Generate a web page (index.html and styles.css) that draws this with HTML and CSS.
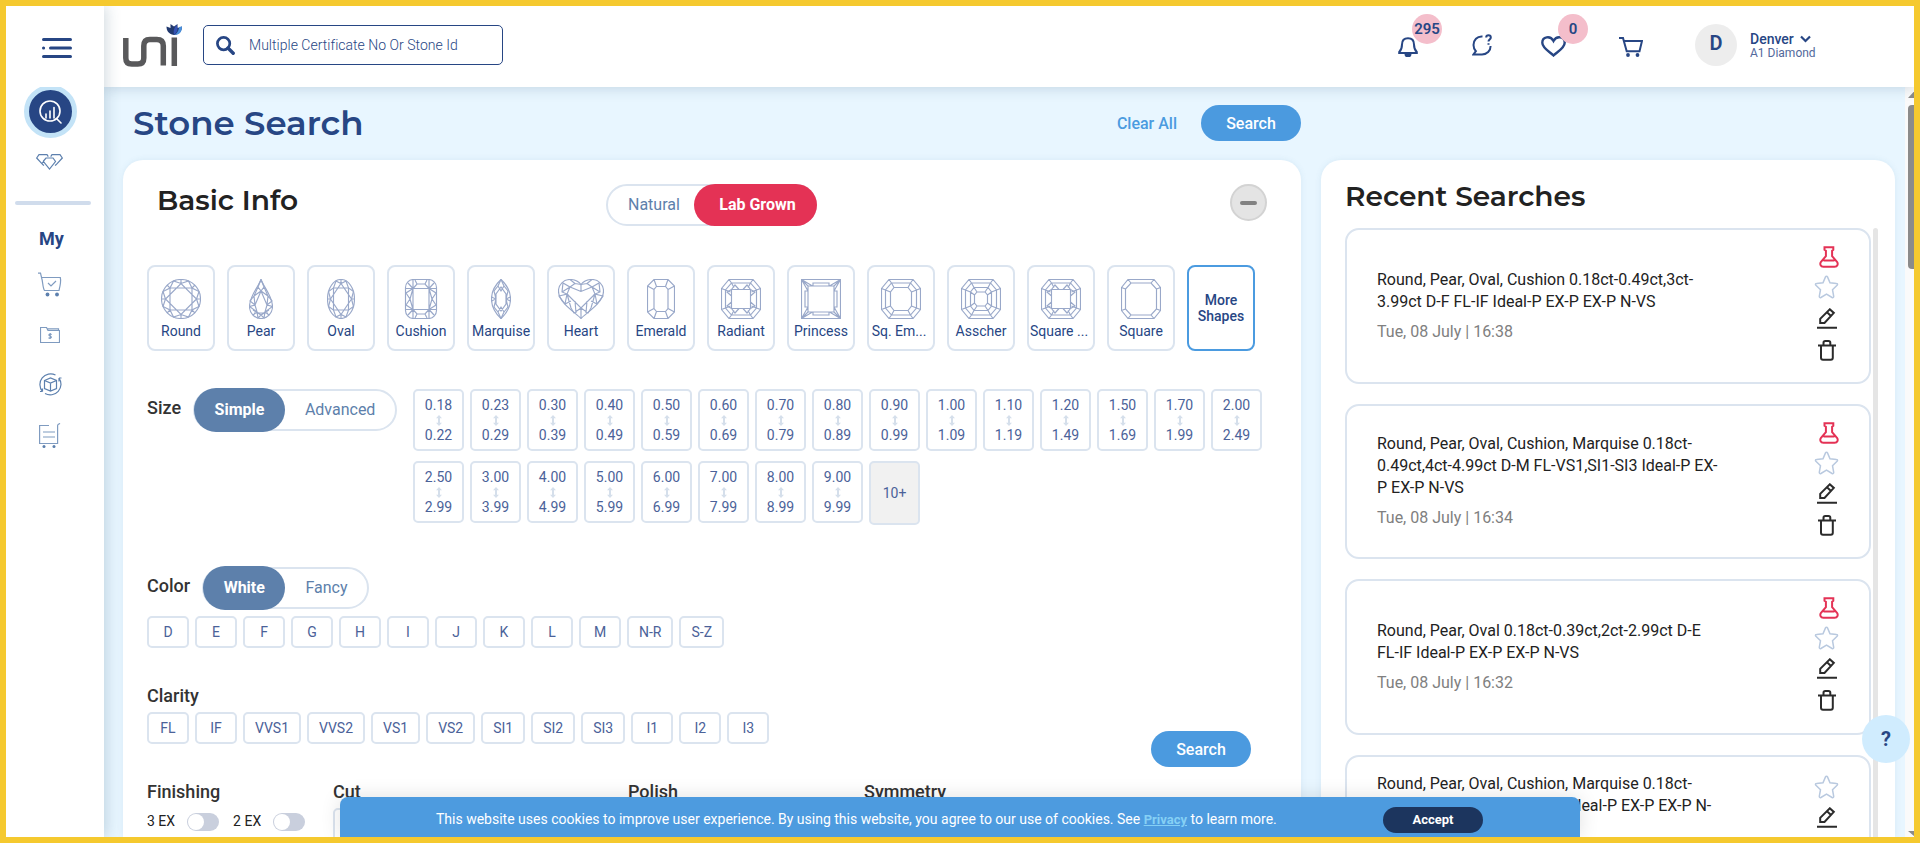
FILE: index.html
```html
<!DOCTYPE html>
<html lang="en">
<head>
<meta charset="utf-8">
<title>Stone Search</title>
<link rel="stylesheet" href="styles.css">
</head>
<body>
<svg class="defs" aria-hidden="true">
  <symbol id="round" viewBox="0 0 40 40"><circle cx="20" cy="20" r="19.5"/><path d="M31 31H9V9h22zM35.500 20 20 35.500 4.500 20 20 4.500z"/><path d="M35.500 20 38 27.500 31 31 27.500 38 20 35.500 12.500 38 9 31 2 27.500 4.500 20 2 12.500 9 9 12.500 2 20 4.500 27.500 2 31 9 38 12.500zM35.500 20h4M31 31l3 3M20 35.500v4M9 31l-3 3M4.500 20h-4M9 9 6 6M20 4.500v-4M31 9l3-3"/></symbol>
  <symbol id="oval" viewBox="0 0 28 40"><ellipse cx="14" cy="20" rx="13.500" ry="19.500"/><path d="M21.500 31h-15V9h15zM24.500 20 14 35.500 3.500 20 14 4.500z"/><path d="M24.500 20 26.500 27.500 21.500 31 19 38 14 35.500 9 38 6.500 31 1.500 27.500 3.500 20 1.500 12.500 6.500 9 9 2 14 4.500 19 2 21.500 9 26.500 12.500zM24.500 20h3M14 35.500v4M3.500 20h-3M14 4.500v-4"/></symbol>
  <symbol id="pear" viewBox="0 0 24 40"><path d="M12 .5C10 7 .5 17 .5 27.500a11.500 12 0 0 0 23 0C23.500 17 14 7 12 .5z"/><path d="M12 .5 9 8l3 4 3-4zM12 12 6 26l2 7 4 3 4-3 2-7zM9 8l-4 9 7-5 7 5-4-9M5 17l1 9-5.500 1.500L8 33l-4 3M19 17l-1 9 5.500 1.500L16 33l4 3M5 17l-4 5 5 4M19 17l4 5-5 4M8 33l1 6 3-3 3 3 1-6M4 31l8 5 8-5M5 34h14"/></symbol>
  <symbol id="cushion" viewBox="0 0 32 40"><rect x=".5" y=".5" width="31" height="39" rx="8"/><path d="M8 1v38M24 1v38M1 9.500h30M1 30.500h30M8 9.500 1 14l4 6-4 6 7 4.500M5 20 8 9.500M5 20l3 10.500M24 9.500l7 4.500-4 6 4 6-7 4.500M27 20 24 9.500M27 20l-3 10.500M8 9.500 3 4M24 9.500 29 4M8 30.500 3 36M24 30.500l5 5.500M8 9.500 12 5h8l4 4.500M10 1l2 4M22 1l-2 4M8 30.500l4 4.500h8l4-4.500M10 39l2-4M22 39l-2-4"/></symbol>
  <symbol id="marquise" viewBox="0 0 20 40"><path d="M10 .5C4 6 .5 13 .5 20S4 34 10 39.500C16 34 19.500 27 19.500 20S16 6 10 .5z"/><path d="M10 8 5 15v10l5 7 5-7V15zM10 .5 7 7l3 5 3-5zM10 39.500 7 33l3-5 3 5zM7 7l-4 5 2 8-4.500 2M13 7l4 5-2 8 4.500 2M7 33l-4-5 2-8-4.500-2M13 33l4-5-2-8 4.500-2"/></symbol>
  <symbol id="heart" viewBox="0 0 46 40"><path d="M23 39.500C18 34 .5 24 .5 12A11.500 11.500 0 0 1 12 .5C17 .5 21 3 23 5.500 25 3 29 .5 34 .5A11.500 11.500 0 0 1 45.500 12C45.500 24 28 34 23 39.500z"/><path d="M23 12.500 12 8l-3 7 14 14 14-14-3-7zM23 5.500v7M12 .5l5 4-5 3.500L5 4l-1 9 5 2-8 2 6 8 2-10 4 14 3 5 7-5 7 5 3-5 4-14 2 10 6-8-8-2 5-2-1-9-7 4-5-3.500 5-4M12 8l-8 5M34 8l8 5M13 22l-6 3M33 22l6 3M17 4.500l6 1 6-1M23 29v10M17 22l1 12M29 22l-1 12"/></symbol>
  <symbol id="emerald" viewBox="0 0 28 40"><path d="M7 .5h14l6.500 6.500v26L21 39.500H7L.5 33V7zM9.500 7.500h9l2.500 3v19l-2.500 3h-9l-2.500-3v-19zM7 .5l2.500 7M21 .5l-2.500 7M.5 7 7 10.500M27.500 7 21 10.500M7 39.500l2.500-7M21 39.500l-2.500-7M.5 33 7 29.500M27.500 33 21 29.500"/></symbol>
  <symbol id="octagon" viewBox="0 0 40 40"><path d="M8 .5h24l7.500 9v21l-7.500 9H8l-7.500-9v-21zM10.500 4h19l6 7v18l-6 7h-19l-6-7V11zM8 .5 10.500 4 13 8.500M32 .5 29.500 4 27 8.500M.5 9.500 4.500 11l5 2M39.500 9.500l-4 1.500-5 2M8 39.500l2.500-3.500 2.500-4.500M32 39.500 29.500 36 27 31.500M.5 30.500l4-1.500 5-2M39.500 30.500l-4-1.500-5-2"/></symbol>
  <symbol id="radiant" viewBox="0 0 40 40"><use href="#octagon"/><path d="M10.500 10.500h19v19h-19zM10.500 10.500 14 6l4 4.500M29.500 10.500 26 6l-4 4.500M10.500 29.500 14 34l4-4.500M29.500 29.500 26 34l-4-4.500M10.500 10.500 6 13l4.500 4M29.500 10.500 34 13l-4.500 4M10.500 29.500 6 27l4.500-4M29.500 29.500 34 27l-4.500-4"/></symbol>
  <symbol id="princess" viewBox="0 0 40 40"><path d="M.5.5h39v39H.5zM7 7h26v26H7zM.5.5 7 7M39.500.5 33 7M.5 39.500 7 33M39.500 39.500 33 33M.5.5 11.500 7M.5.5 7 12M39.500.5 28.500 7M39.500.5 33 12M.5 39.500 11.500 33M.5 39.500 7 28M39.500 39.500 28.500 33M39.500 39.500 33 28M12 7V4h16v3M12 33v3h16v-3M7 12H4v16h3M33 12h3v16h-3"/></symbol>
  <symbol id="sqem" viewBox="0 0 40 40"><use href="#octagon"/><path d="M13 8.500h14l3.500 4.500v14L27 31.500H13L9.500 27V13z"/></symbol>
  <symbol id="asscher" viewBox="0 0 40 40"><use href="#octagon"/><path d="M13 8.500h14l3.500 4.500v14L27 31.500H13L9.500 27V13zM16 13h8l2.500 3v8L24 27h-8l-2.500-3v-8zM13 8.500l3 4.500M27 8.500 24 13M13 31.500l3-4.500M27 31.500 24 27M9.500 13l4 3M30.500 13l-4 3M9.500 27l4-3M30.500 27l-4-3"/></symbol>
  <symbol id="square" viewBox="0 0 40 40"><path d="M7 .5h26l6.500 8v23l-6.500 8H7l-6.500-8v-23zM10 4h20l5.500 6v20L30 36H10l-5.500-6V10zM7 .5 10 4M33 .5 30 4M.5 8.500l4 1.500M39.500 8.500l-4 1.500M7 39.500l3-3.500M33 39.500 30 36M.5 31.500l4-1.500M39.500 31.500l-4-1.500"/></symbol>
  <symbol id="flask" viewBox="0 0 20 22"><path d="M5.500 1.200h8.800v2.600l-1.200 1v5.400l4.900 5.600c1.400 2 .6 5-2.400 5H4.400c-3 0-3.800-3-2.400-5l4.900-5.600V4.800l-1.400-1zM4.500 14.600h11"/></symbol>
  <symbol id="star" viewBox="0 0 25 24"><path d="M12.500 1.200c.5 0 .8.300 1 .7l2.500 5.900 6.500.7c1.200.1 1.300 1 .6 1.700l-4.600 4.500 1.200 6.700c.1 1-.7 1.600-1.600 1.100l-5.600-3.300-5.600 3.300c-.9.500-1.700-.1-1.600-1.100l1.200-6.700L1.900 10.200c-.7-.7-.6-1.600.6-1.700L9 7.800l2.500-5.900c.2-.4.500-.7 1-.7z"/></symbol>
  <symbol id="pencil" viewBox="0 0 20 21"><path d="M12.800 1.300l4 3.600L7.500 15H3.200v-4.200zM10 4.200l4 3.700M0 19.700h20"/></symbol>
  <symbol id="trash" viewBox="0 0 18 21"><path d="M0 5.500h18M3 6v11.800q0 2 2 2h7.800q2 0 2-2V6M5.500 5.500V2.800Q5.500 1 7.300 1h3.200q1.800 0 1.800 1.800v2.700"/></symbol>
  <symbol id="updown" viewBox="0 0 6 11"><path d="M3 0 6 3.200H4v4.600h2L3 11 0 7.800h2V3.200H0z"/></symbol>
</svg>
<div class="frame">
  <aside class="sidebar">
    <div class="menu"><svg width="30" height="20" viewBox="0 0 30 20"><path d="M1.500 1.500h27M8.500 10h20M1.500 18.500h27M1.500 10h.1" stroke="#274684" stroke-width="3" stroke-linecap="round"/></svg></div>
    <nav class="nav">
      <a class="active"><svg width="23" height="24" viewBox="0 0 23 24" fill="none" stroke="#fff" stroke-width="1.600"><circle cx="11" cy="11" r="10"/><path d="M17.500 18.500l4.500 4.500M7 14v4M11 11v7M15 7.500V18" stroke-linecap="round"/></svg></a>
      <svg class="diamonds line" width="27" height="16" viewBox="0 0 27 16"><path d="M8 11.500 7 10.800 .7 4 3 .7h8l1.300 2M19 11.500l1-.7L26.300 4 24 .7h-8l-1.300 2M7.500 7 10 4h7l2.500 3.500-6 7.500-6-7.500zM6 9.500l1.500-2"/></svg>
      <hr>
      <b class="my">My</b>
      <svg class="n1 line" width="24" height="25" viewBox="0 0 24 25"><path d="M0 1.200h2.500l1 4.300h18.800c1 4-.3 9-1.300 13H6.500c-2-3-1.500-9-3-13M10 11l3 3 5-5"/><g fill="#5d80ae" stroke="none"><circle cx="9.500" cy="22.500" r="1.900"/><circle cx="19" cy="22.500" r="1.900"/></g></svg>
      <svg class="n2 line" width="20" height="16" viewBox="0 0 20 16"><path d="M.5 15.500V.5h6l1.500 3h11.500v12zM7.500 1.800h11v2M11.700 7.500q-1.700-1-2.600 0c-1 1.500 2.600 1.500 2.200 3q-1 1.300-2.800.2M10.200 6v6"/></svg>
      <svg class="n3 line" width="23" height="23" viewBox="0 0 23 23"><path d="M16.500 2A10.700 10.700 0 0 0 3.500 18.500M6 20.500A10.700 10.700 0 0 0 20 5M20 5v3.500M20 5h2.500M3.500 18.500V15.500M3.500 18.500H1M5.500 7.500 11.500 5l6 2.500v8l-6 2.500-6-2.500zM5.500 7.500l6 2.500 6-2.500M11.500 10v8"/></svg>
      <svg class="n4 line" width="22" height="25" viewBox="0 0 22 25"><path d="M10 2.500H.6v18h18v-18c0-1 .7-1.500 2.500-2M4 9h12M4 14h12M.6 20.500h18"/><g fill="#5d80ae" stroke="none"><circle cx="5" cy="23.500" r="1.500"/><circle cx="15" cy="23.500" r="1.500"/></g></svg>
    </nav>
  </aside>
  <div class="page">
    <header class="top">
      <svg class="logo" width="61" height="44" viewBox="0 0 61 44"><g fill="none" stroke="#59595b" stroke-width="5.500"><path d="M2.800 14v20q0 6 6 6h6q6 0 6-6V22q0-6.500 6-6.500h7q6.500 0 6.500 6.500v19.500M51.300 13.500v28.500"/></g><path d="M51 11C45 10 43.500 6 43.500 2.500l4 1.500V0l3.500 2.500L54.500 0v4l4.500-1.500C59 7 56.500 10.500 51 11z" fill="#21396f"/><path d="M52 11c3-3 4-6 4-8l3-.500c0 5-2 8-7 8.500z" fill="#4a90dc"/><path d="M51 11c-1-4 0-7 2.500-10 1.800 3 1.500 7-2.500 10z" fill="#3552b3"/></svg>
      <div class="search"><svg width="19" height="19" viewBox="0 0 19 19" fill="none" stroke="#274684"><circle cx="7.600" cy="7.600" r="6.200" stroke-width="2.700"/><path d="M12 12l5.200 5.200" stroke-width="3.400" stroke-linecap="round"/></svg><span>Multiple Certificate No Or Stone Id</span></div>
      <div class="tools">
        <div class="tool bell"><svg width="20" height="20" viewBox="0 0 20 20"><path d="M10 1.200c-4 0-6 2.600-6 6.300 0 4-.6 5.500-2.800 7.500v1h17.600v-1C16.600 13 16 11.500 16 7.500c0-3.700-2-6.300-6-6.300z"/><path d="M7.500 17a2.500 2.500 0 0 0 5 0z" fill="#274684"/></svg><b class="badge">295</b></div>
        <div class="tool chat"><svg width="20" height="22" viewBox="0 0 20 22"><path d="M10.500 2.500C5 2 1.500 6 1.500 11c0 2.500.9 4.700 2.400 6.200L1.500 20.500H10c5 0 8.600-3.700 8.600-8.500M14.200 3.500c0-3 4.600-3 4.600 0 0 2-2.300 2-2.300 4M16.500 9.300v1.500"/></svg></div>
        <div class="tool like"><svg width="25" height="21" viewBox="0 0 25 21"><path d="M12.500 19.500C9 16 1.300 12 1.300 6.700c0-6 8-7.500 11.200-1.700 3.200-5.800 11.200-4.300 11.200 1.700 0 5.300-7.700 9.300-11.200 12.800z" stroke-width="2.400"/></svg><b class="badge">0</b></div>
        <div class="tool cart"><svg width="24" height="20" viewBox="0 0 24 20"><path d="M0 1h4l3.700 13.200h12.800L23 4H5"/><g fill="#274684" stroke="none"><circle cx="9" cy="18" r="1.900"/><circle cx="18.500" cy="18" r="1.900"/></g></svg></div>
        <div class="avatar">D</div>
        <div class="who"><div class="name">Denver <svg width="11" height="8" viewBox="0 0 11 8"><path d="M1 1.500l4.500 4.500L10 1.500" fill="none" stroke="#274684" stroke-width="2.200"/></svg></div><div class="org">A1 Diamond</div></div>
      </div>
    </header>
    <main class="content">
      <div class="titlebar"><h1>Stone Search</h1><div class="acts"><a>Clear All</a><button class="btn">Search</button></div></div>
      <div class="cols">
        <section class="card basic">
          <div class="head"><h2>Basic Info</h2><div class="toggle kind"><span class="off">Natural</span><span class="on">Lab Grown</span></div><div class="minus"><i></i></div></div>
          <div class="shapes">
            <div class="shape"><svg width="40" height="40"><use href="#round"/></svg><span>Round</span></div>
            <div class="shape"><svg width="24" height="40"><use href="#pear"/></svg><span>Pear</span></div>
            <div class="shape"><svg width="28" height="40"><use href="#oval"/></svg><span>Oval</span></div>
            <div class="shape"><svg width="34" height="40"><use href="#cushion"/></svg><span>Cushion</span></div>
            <div class="shape"><svg width="20" height="40"><use href="#marquise"/></svg><span>Marquise</span></div>
            <div class="shape"><svg width="46" height="40"><use href="#heart"/></svg><span>Heart</span></div>
            <div class="shape"><svg width="28" height="40"><use href="#emerald"/></svg><span>Emerald</span></div>
            <div class="shape"><svg width="40" height="40"><use href="#radiant"/></svg><span>Radiant</span></div>
            <div class="shape"><svg width="40" height="40"><use href="#princess"/></svg><span>Princess</span></div>
            <div class="shape"><svg width="40" height="40"><use href="#sqem"/></svg><span class="cut">Sq. Em...</span></div>
            <div class="shape"><svg width="40" height="40"><use href="#asscher"/></svg><span>Asscher</span></div>
            <div class="shape"><svg width="40" height="40"><use href="#radiant"/></svg><span class="cut">Square ...</span></div>
            <div class="shape"><svg width="40" height="40"><use href="#square"/></svg><span>Square</span></div>
            <div class="shape more">More<br>Shapes</div>
          </div>
          <div class="size">
            <div class="lab"><h3>Size</h3><div class="toggle"><span class="on">Simple</span><span class="off">Advanced</span></div></div>
            <div class="sizes">
              <div class="sz">0.18<svg><use href="#updown"/></svg>0.22</div>
              <div class="sz">0.23<svg><use href="#updown"/></svg>0.29</div>
              <div class="sz">0.30<svg><use href="#updown"/></svg>0.39</div>
              <div class="sz">0.40<svg><use href="#updown"/></svg>0.49</div>
              <div class="sz">0.50<svg><use href="#updown"/></svg>0.59</div>
              <div class="sz">0.60<svg><use href="#updown"/></svg>0.69</div>
              <div class="sz">0.70<svg><use href="#updown"/></svg>0.79</div>
              <div class="sz">0.80<svg><use href="#updown"/></svg>0.89</div>
              <div class="sz">0.90<svg><use href="#updown"/></svg>0.99</div>
              <div class="sz">1.00<svg><use href="#updown"/></svg>1.09</div>
              <div class="sz">1.10<svg><use href="#updown"/></svg>1.19</div>
              <div class="sz">1.20<svg><use href="#updown"/></svg>1.49</div>
              <div class="sz">1.50<svg><use href="#updown"/></svg>1.69</div>
              <div class="sz">1.70<svg><use href="#updown"/></svg>1.99</div>
              <div class="sz">2.00<svg><use href="#updown"/></svg>2.49</div>
              <div class="sz">2.50<svg><use href="#updown"/></svg>2.99</div>
              <div class="sz">3.00<svg><use href="#updown"/></svg>3.99</div>
              <div class="sz">4.00<svg><use href="#updown"/></svg>4.99</div>
              <div class="sz">5.00<svg><use href="#updown"/></svg>5.99</div>
              <div class="sz">6.00<svg><use href="#updown"/></svg>6.99</div>
              <div class="sz">7.00<svg><use href="#updown"/></svg>7.99</div>
              <div class="sz">8.00<svg><use href="#updown"/></svg>8.99</div>
              <div class="sz">9.00<svg><use href="#updown"/></svg>9.99</div>
              <div class="sz plus">10+</div>
            </div>
          </div>
          <div class="lab color"><h3>Color</h3><div class="toggle"><span class="on">White</span><span class="off">Fancy</span></div></div>
          <div class="chips"><span>D</span><span>E</span><span>F</span><span>G</span><span>H</span><span>I</span><span>J</span><span>K</span><span>L</span><span>M</span><span>N-R</span><span>S-Z</span></div>
          <h3 class="clarity">Clarity</h3>
          <div class="chips"><span>FL</span><span>IF</span><span>VVS1</span><span>VVS2</span><span>VS1</span><span>VS2</span><span>SI1</span><span>SI2</span><span>SI3</span><span>I1</span><span>I2</span><span>I3</span></div>
          <div class="finish">
            <div class="f1"><h3>Finishing</h3><div class="ex"><span>3 EX</span><i></i><span>2 EX</span><i></i></div></div>
            <div class="f2"><h3>Cut</h3><div class="cutbox"></div></div>
            <div class="f3"><h3>Polish</h3></div>
            <div class="f4"><h3>Symmetry</h3></div>
          </div>
        </section>
        <section class="card recent">
          <h2>Recent Searches</h2>
          <div class="listwrap">
          <div class="list">
            <article class="c1"><div class="txt"><p>Round, Pear, Oval, Cushion 0.18ct-0.49ct,3ct-<br>3.99ct D-F FL-IF Ideal-P EX-P EX-P N-VS</p><time>Tue, 08 July | 16:38</time></div><div class="ops"><svg class="fl"><use href="#flask"/></svg><svg class="st"><use href="#star"/></svg><svg class="pe"><use href="#pencil"/></svg><svg class="tr"><use href="#trash"/></svg></div></article>
            <article class="c2"><div class="txt"><p>Round, Pear, Oval, Cushion, Marquise 0.18ct-<br>0.49ct,4ct-4.99ct D-M FL-VS1,SI1-SI3 Ideal-P EX-<br>P EX-P N-VS</p><time>Tue, 08 July | 16:34</time></div><div class="ops"><svg class="fl"><use href="#flask"/></svg><svg class="st"><use href="#star"/></svg><svg class="pe"><use href="#pencil"/></svg><svg class="tr"><use href="#trash"/></svg></div></article>
            <article class="c3"><div class="txt"><p>Round, Pear, Oval 0.18ct-0.39ct,2ct-2.99ct D-E<br>FL-IF Ideal-P EX-P EX-P N-VS</p><time>Tue, 08 July | 16:32</time></div><div class="ops"><svg class="fl"><use href="#flask"/></svg><svg class="st"><use href="#star"/></svg><svg class="pe"><use href="#pencil"/></svg><svg class="tr"><use href="#trash"/></svg></div></article>
            <article class="c4"><div class="txt"><p>Round, Pear, Oval, Cushion, Marquise 0.18ct-<br><span class="l2">Ideal-P EX-P EX-P N-</span></p></div><div class="ops"><svg class="st"><use href="#star"/></svg><svg class="pe"><use href="#pencil"/></svg></div></article>
          </div>
          <i class="bar"></i>
          </div>
        </section>
      </div>
    </main>
  </div>
  <div class="scroll"><svg width="9" height="750" viewBox="0 0 9 750"><path d="M3 11l5.500-6h.5v6zM3 744h6v5z" fill="#8b8b8b"/><rect x="3" y="18" width="12" height="164" rx="4" fill="#8b8b8b"/></svg></div>
  <button class="btn float">Search</button>
  <div class="help">?</div>
  <div class="cookie"><p>This website uses cookies to improve user experience. By using this website, you agree to our use of cookies. See <a>Privacy</a> to learn more.</p><button>Accept</button></div>
</div>
</body>
</html>
```
FILE: styles.css
```css
* { box-sizing: border-box; }
body { margin: 0; font-family: Roboto, "Liberation Sans", sans-serif; color: #222; }
h1, h2, h3, p, hr { margin: 0; }
h1, h2 { font-family: Montserrat, Inter, sans-serif; font-weight: 600; }
h3 { font-size: 18px; font-weight: 500; line-height: 22px; color: #333; }
button { font-family: inherit; border: 0; padding: 0; }
svg { display: block; flex: none; }
.defs { position: absolute; width: 0; height: 0; }
.frame { position: relative; width: 1920px; height: 843px; border: 6px solid #f5c92f; overflow: hidden; background: #e8f6ff; display: flex; }

.sidebar { width: 98px; flex: none; background: #fff; box-shadow: 2px 0 14px rgba(40, 80, 110, .22); z-index: 3; display: flex; flex-direction: column; }
.menu { height: 81px; padding: 32px 0 0 36px; flex: none; }
.nav { flex: 1; overflow: hidden; display: flex; flex-direction: column; align-items: flex-start; }
.active { width: 53px; height: 53px; margin: -2px 0 0 18px; border: 5px solid #c3e3f7; border-radius: 50%; background: #274684; display: flex; align-items: center; justify-content: center; flex: none; }
.line { fill: none; stroke: #7f9bc0; stroke-width: 1.2; }
.diamonds { margin: 16px 0 0 30px; stroke: #5d80ae; }
hr { width: 76px; height: 4px; border: 0; border-radius: 2px; background: #d0dcec; margin: 31px 0 0 9px; }
.my { font-size: 18px; line-height: 22px; font-weight: 700; color: #274684; margin: 23px 0 0 33px; }
.n1 { margin: 22px 0 0 32px; }
.n2 { margin: 30px 0 0 34px; }
.n3 { margin: 30px 0 0 33px; stroke: #5d80ae; }
.n4 { margin: 27px 0 0 33px; }

.page { flex: 1; min-width: 0; display: flex; flex-direction: column; }
.top { height: 81px; flex: none; background: #fff; box-shadow: 0 2px 12px rgba(40, 80, 110, .18); z-index: 2; display: flex; align-items: flex-start; position: relative; }
.logo { margin: 18px 0 0 19px; }
.search { margin: 19px 0 0 19px; width: 300px; height: 40px; border: 1px solid #274684; border-radius: 5px; display: flex; align-items: center; padding: 0 12px; gap: 14px; font-size: 14px; font-weight: 300; color: #274684; }
.search span { letter-spacing: .02px; }
.tools { display: flex; align-items: flex-start; margin-left: auto; padding-right: 98px; }
.tool { position: relative; fill: none; stroke: #274684; stroke-width: 2; }
.bell { margin-top: 31px; }
.chat { margin: 28px 0 0 54px; }
.like { margin: 30px 0 0 49px; }
.cart { margin: 31px 0 0 53px; }
.badge { position: absolute; left: 14px; top: -23px; width: 30px; height: 30px; border-radius: 50%; background: #f4becb; color: #274684; font-size: 15px; font-weight: 600; line-height: 31px; text-align: center; }
.like .badge { left: 17px; top: -22px; }
.avatar { width: 42px; height: 42px; margin: 18px 0 0 52px; border-radius: 50%; background: #ededed; color: #274684; font-size: 20px; font-weight: 600; line-height: 38px; text-align: center; }
.who { margin: 24px 0 0 13px; width: 66px; white-space: nowrap; color: #274684; }
.name { display: flex; gap: 6px; align-items: center; font-size: 14px; font-weight: 500; line-height: 18px; }
.org { font-size: 12px; line-height: 11px; color: #52699b; }

.content { flex: 1; min-height: 0; padding-left: 19px; display: flex; flex-direction: column; }
.titlebar { height: 73px; flex: none; width: 1178px; display: flex; justify-content: space-between; padding: 18px 0 0 10px; }
h1 { font-size: 34px; line-height: 36px; color: #274684; }
.acts { display: flex; align-items: center; height: 36px; gap: 24px; font-size: 16px; font-weight: 500; color: #4b9be0; }
.btn { width: 100px; height: 36px; border-radius: 18px; background: #4b9adf; color: #fff; font-size: 16px; font-weight: 500; }
.cols { flex: 1; min-height: 0; display: flex; gap: 20px; }
.card { background: #fff; border-radius: 20px 20px 0 0; box-shadow: 0 0 6px rgba(60, 120, 160, .1); }
.basic { width: 1178px; padding: 0 24px; }
.head { display: flex; height: 105px; padding: 24px 10px 0 10px; align-items: flex-start; }
h2 { font-size: 28px; line-height: 34px; }
.head h2 { width: 449px; line-height: 32px; }
.toggle { height: 42px; border: 2px solid #dbe4ef; border-radius: 21px; display: flex; font-size: 16px; line-height: 38px; width: max-content; }
.toggle .on { background: #5d80ab; color: #fff; font-weight: 700; border-radius: 22px; height: 44px; line-height: 44px; margin: -3px 0 -3px -1px; padding: 0 20.5px; }
.toggle .off { color: #5d80ab; padding: 0 20px; }
.toggle.kind { width: 211px; }
.kind .on { background: #e43255; height: 42px; line-height: 42px; margin: -2px -2px -2px 0; width: 123px; padding: 0 0 0 4px; text-align: center; }
.kind .off { padding: 0; width: 86px; padding-left: 20px; }
.minus { width: 37px; height: 37px; border-radius: 50%; border: 2px solid #d3d3d3; background: #e4e4e4; margin-left: auto; display: flex; align-items: center; justify-content: center; }
.minus i { width: 17px; height: 4px; border-radius: 2px; background: #828282; }
.shapes { display: flex; gap: 12px; }
.shape { width: 68px; height: 86px; border: 2px solid #dbe4ef; border-radius: 8px; padding-top: 12px; display: flex; flex-direction: column; align-items: center; font-size: 14px; line-height: 16px; color: #274684; white-space: nowrap; }
.shape span { margin-top: 4px; }
.shape .cut { margin-right: 4px; }
.shape svg { fill: none; stroke: #99a8c9; stroke-width: 1.15; }
.more { border-color: #4b9be0; justify-content: center; padding: 0; text-align: center; font-weight: 500; }
.size { display: flex; margin-top: 38px; height: 177px; }
.lab { display: flex; align-items: flex-start; gap: 12px; }
.size .lab { width: 266px; flex: none; }
.lab h3 { margin-top: 8px; }
.sizes { display: flex; flex-wrap: wrap; gap: 10px 6px; align-items: flex-start; align-content: flex-start; }
.sz { width: 51px; height: 62px; border: 2px solid #dbe4ef; border-radius: 5px; display: flex; flex-direction: column; align-items: center; justify-content: center; padding-bottom: 1px; font-size: 14px; line-height: 16px; color: #4b6299; }
.sz svg { width: 6px; height: 11px; margin: 2px 0 1px; fill: #d5dfeb; }
.plus { height: 64px; background: #f1f1f1; padding: 0; }
.color { height: 49px; margin-top: 1px; }
.chips { display: flex; gap: 6px; }
.chips span { min-width: 42px; height: 32px; padding: 0 10px; border: 2px solid #dbe4ef; border-radius: 5px; text-align: center; font-size: 14px; line-height: 28px; color: #4b6299; }
.clarity { margin: 37px 0 5px; }
.finish { display: flex; margin-top: 37px; }
.f1 { width: 186px; } .f2 { width: 295px; } .f3 { width: 236px; }
.ex { display: flex; align-items: center; margin-top: 8px; font-size: 14px; line-height: 20px; }
.ex i { width: 32px; height: 18px; border-radius: 9px; background: #c9cfdd; margin: 2px 14px 0 12px; padding: 1px; }
.ex i::before { content: ""; display: block; width: 16px; height: 16px; border-radius: 50%; background: #fff; }
.cutbox { width: 60px; height: 50px; margin-top: 5px; border: 2px solid #dbe4ef; border-radius: 5px; }

.recent { width: 574px; padding: 19px 17px 0 24px; overflow: hidden; }
.listwrap { display: flex; gap: 2px; margin-top: 15px; }
.list { display: flex; flex-direction: column; gap: 20px; }
.bar { width: 5px; background: #e5e5e5; border-radius: 3px; }
article { width: 526px; height: 156px; border: 2px solid #dbe4ef; border-radius: 14px; padding: 0 30px; display: flex; justify-content: space-between; font-size: 16px; line-height: 22px; }
.c2 { height: 155px; }
.txt { padding-top: 39px; white-space: nowrap; }
.c2 .txt { padding-top: 27px; }
.c4 .txt { padding-top: 16px; }
.l2 { padding-left: 191px; }
time { display: block; margin-top: 8px; color: #808080; }
.ops { display: flex; flex-direction: column; align-items: center; fill: none; stroke: #2b2b2b; stroke-width: 2; }
.fl { width: 20px; height: 22px; margin: 16px 0 0 5px; stroke: #e43255; }
.st { width: 25px; height: 24px; margin-top: 7px; stroke: #b9c9df; stroke-width: 1.5; }
.pe { width: 20px; height: 21px; margin-top: 9px; }
.tr { width: 18px; height: 21px; margin-top: 11px; }
.c2 .pe, .c3 .pe, .c4 .pe { margin-top: 8px; }
.c4 .st { margin-top: 18px; }

.scroll { position: absolute; left: 1899px; top: 81px; width: 9px; height: 750px; background: #fafafa; }
.float { position: absolute; left: 1145px; top: 725px; }
.help { position: absolute; left: 1856px; top: 709px; width: 48px; height: 48px; border-radius: 50%; background: #d0ecfe; color: #274684; font-size: 20px; font-weight: 700; line-height: 48px; text-align: center; z-index: 4; }
.cookie { position: absolute; left: 334px; top: 791px; width: 1240px; height: 40px; background: #4d9bdf; border-radius: 8px 8px 0 0; box-shadow: 0 0 20px rgba(0, 0, 0, .12); display: flex; align-items: flex-start; padding: 10px 97px 0 96px; justify-content: space-between; color: #fff; font-size: 14px; line-height: 22px; z-index: 4; }
.cookie p { margin-top: 1px; }
.cookie a { color: #85d0f5; font-size: 13px; font-weight: 700; text-decoration: underline; }
.cookie button { width: 100px; height: 26px; border-radius: 13px; background: #1c355e; color: #fff; font-size: 13px; font-weight: 700; line-height: 26px; }
```
